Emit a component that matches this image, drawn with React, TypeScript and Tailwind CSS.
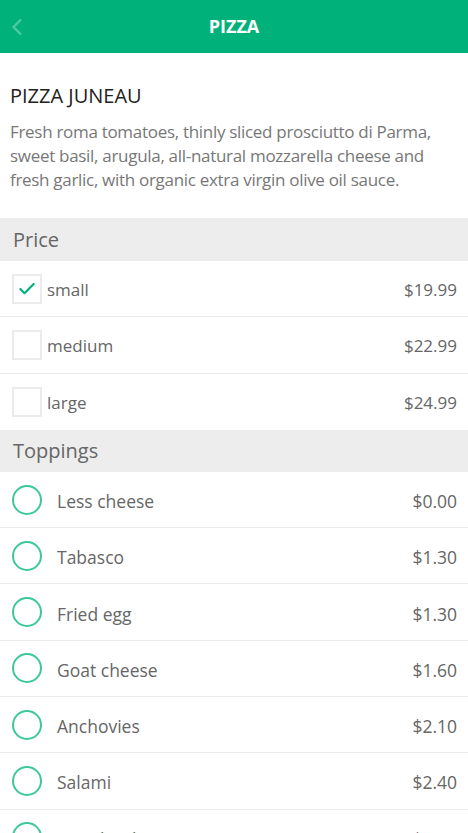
import { Check } from 'lucide-react';

const sizes = [
  { label: 'small', price: '$19.99', checked: true },
  { label: 'medium', price: '$22.99', checked: false },
  { label: 'large', price: '$24.99', checked: false },
];

const toppings = [
  { label: 'Less cheese', price: '$0.00' },
  { label: 'Tabasco', price: '$1.30' },
  { label: 'Fried egg', price: '$1.30' },
  { label: 'Goat cheese', price: '$1.60' },
  { label: 'Anchovies', price: '$2.10' },
  { label: 'Salami', price: '$2.40' },
  { label: 'Sun-dried tomatoes', price: '$2.50' },
];

export default function App() {
  return (
    <div className="h-[833px] overflow-hidden bg-white font-['Open_Sans',sans-serif]">
      {/* top bar */}
      <div className="relative flex h-[53px] items-center justify-center bg-[#00b27a]">
        <svg
          className="absolute left-[11px] top-[18px] h-[18px] w-[12px] opacity-30"
          viewBox="0 0 12 18"
          fill="none"
          stroke="white"
          strokeWidth={2.4}
        >
          <path d="M10 1.5L2.5 9l7.5 7.5" />
        </svg>
        <h1 className="text-[18px] font-bold text-white">PIZZA</h1>
      </div>

      <div className="px-[10px] pt-[30px] pb-[26px]">
        <h2 className="text-[20px] leading-[26px] text-[#222]">PIZZA JUNEAU</h2>
        <p className="mt-[11px] text-[17px] leading-[24px] tracking-[-0.3px] text-[#777]">
          Fresh roma tomatoes, thinly sliced prosciutto di Parma, sweet basil, arugula, all-natural
          mozzarella cheese and fresh garlic, with organic extra virgin olive oil sauce.
        </p>
      </div>

      <div className="flex h-[43px] items-center bg-[#ededed] px-[13px] text-[20px] text-[#666]">
        Price
      </div>
      {sizes.map((s, i) => (
        <div
          key={s.label}
          className={
            'flex h-[56.3px] items-center justify-between pl-[12px] pr-[11px] ' +
            (i < sizes.length - 1 ? 'border-b border-[#eaeaea]' : '')
          }
        >
          <div className="flex items-center">
            <span className="flex h-[30px] w-[30px] items-center justify-center border-2 border-[#ebebeb]">
              {s.checked && <Check className="h-[20px] w-[20px] text-[#00b27a]" strokeWidth={2.6} />}
            </span>
            <span className="ml-[5px] pt-[2px] text-[17px] text-[#666]">{s.label}</span>
          </div>
          <span className="pt-[2px] text-[17px] text-[#666]">{s.price}</span>
        </div>
      ))}

      <div className="flex h-[42px] items-center bg-[#ededed] px-[13px] text-[20px] text-[#666]">
        Toppings
      </div>
      {toppings.map((t) => (
        <div
          key={t.label}
          className="flex h-[56.3px] items-center justify-between border-b border-[#eaeaea] pl-[12px] pr-[11px]"
        >
          <div className="flex items-center">
            <span className="h-[30px] w-[30px] rounded-full border-2 border-[#3cc997]" />
            <span className="ml-[15px] pt-[3px] text-[17.5px] text-[#666]">{t.label}</span>
          </div>
          <span className="pt-[3px] text-[17.5px] text-[#666]">{t.price}</span>
        </div>
      ))}
    </div>
  );
}
